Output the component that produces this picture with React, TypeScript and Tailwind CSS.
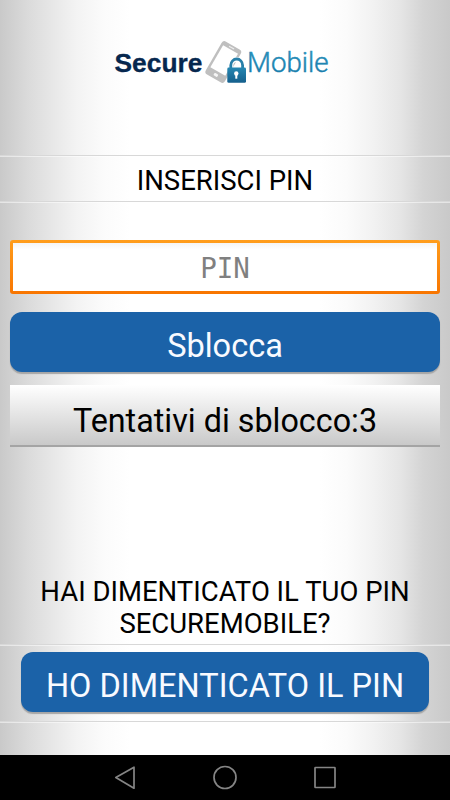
import React from 'react'

interface ActionButtonProps {
  children: React.ReactNode
}

function ActionButton({ children }: ActionButtonProps) {
  return (
    <button className="flex h-[60px] w-full items-center justify-center rounded-[12px] bg-[#1b62a8] pt-[8px] text-[32.5px] leading-none text-[#f8faff] shadow-[0_2px_1px_#a6a6a6]">
      {children}
    </button>
  )
}

// 1px grey line with a light one below it
function Divider() {
  return <div className="h-[2px] border-t border-[#d8d8d8] bg-white/50" />
}

function Logo() {
  return (
    <svg width="220" height="56" viewBox="110 36 220 56" fill="none">
      <defs>
        <linearGradient id="mobileText" x1="0" y1="0" x2="0" y2="1">
          <stop offset="0" stopColor="#2d94bd" />
          <stop offset="1" stopColor="#1478a8" />
        </linearGradient>
        <linearGradient id="lockBody" x1="0" y1="0" x2="0" y2="1">
          <stop offset="0" stopColor="#2587b2" />
          <stop offset="1" stopColor="#155f8c" />
        </linearGradient>
      </defs>
      <text x="114.5" y="72.3" textLength="88" lengthAdjust="spacingAndGlyphs" fontFamily="Liberation Sans, Arial, sans-serif" fontWeight="700" fontSize="26.5" fill="#06274e" stroke="#06274e" strokeWidth=".3">Secure</text>
      <g transform="translate(223.3 62) rotate(30)">
        <rect x="-11" y="-19" width="22" height="38" rx="3.2" fill="#bfbfbf" />
        <rect x="-8.6" y="-14.5" width="17.2" height="25.5" fill="#fff" />
        <rect x="-3" y="-17.2" width="6" height="1.2" rx=".6" fill="#eee" />
        <rect x="-2.2" y="13.5" width="4.4" height="2.8" rx="1" fill="#f5f5f5" />
      </g>
      <path d="M230.8 70V65.8a5.9 6.3 0 0 1 11.8 0V70" stroke="#fff" strokeWidth="5" />
      <path d="M230.8 70V65.3a5.9 6.3 0 0 1 11.8 0V70" stroke="#287fa9" strokeWidth="2.8" />
      <rect x="227.3" y="67.5" width="18.7" height="15.3" rx="1.4" fill="url(#lockBody)" />
      <circle cx="236.3" cy="73.5" r="2.2" fill="#fff" />
      <path d="M235.3 74h2v4.7h-2z" fill="#fff" />
      <text x="247" y="72.3" textLength="81.5" lengthAdjust="spacingAndGlyphs" fontFamily="Roboto, sans-serif" fontWeight="300" fontSize="28.5" fill="url(#mobileText)" stroke="url(#mobileText)" strokeWidth=".45">Mobile</text>
    </svg>
  )
}

function NavigationBar() {
  return (
    <nav className="flex h-[45px] items-center bg-black">
      <svg width="450" height="45" viewBox="0 0 450 45" fill="none" stroke="#858585" strokeWidth="1.7" strokeLinejoin="round">
        <path d="M115.8 22.4L134 12.2V33.2Z" />
        <circle cx="225" cy="22.5" r="11" />
        <rect x="315" y="12.5" width="20" height="20" rx=".5" />
      </svg>
    </nav>
  )
}

export default function App() {
  return (
    <div className="flex h-[800px] w-[450px] flex-col overflow-hidden font-[Roboto,sans-serif] text-black">
      <main className="flex h-[755px] flex-col bg-[linear-gradient(90deg,#c9c9c9_0%,#dadada_6%,#e8e8e8_12%,#f3f3f3_17%,#fbfbfb_23%,#fff_29%,#fff_71%,#fbfbfb_77%,#f2f2f2_83%,#e5e5e5_89%,#d4d4d4_94%,#c9c9c9_100%)]">
        <header className="flex h-[155px] justify-center pt-[36px]">
          <div className="mr-[10px]">
            <Logo />
          </div>
        </header>

        <Divider />
        <h1 className="flex h-[44px] items-center justify-center pt-[3px] text-[27.5px] leading-none">INSERISCI PIN</h1>
        <Divider />

        <section className="flex flex-col px-[10px] pt-[37px]">
          <div className="h-[54px] rounded-[3px] bg-[linear-gradient(#ff9d1c,#f87500)] p-[3px]">
            <input
              type="password"
              placeholder="PIN"
              className="block h-[48px] w-full bg-white bg-[linear-gradient(#f4f4f4,#fff_7px)] pt-[1px] text-center font-['DejaVu_Sans_Mono',monospace] text-[27.5px] outline-none placeholder:text-[#808080]"
            />
          </div>
          <div className="mt-[18px]">
            <ActionButton>Sblocca</ActionButton>
          </div>
          <div className="mt-[13px] flex h-[62px] items-center justify-center border-b-2 border-[#a4a4a4] bg-[linear-gradient(#fff,#c9c9c9)] pt-[13px] text-[32.3px] leading-none">
            Tentativi di sblocco:3
          </div>
        </section>

        <p className="mt-[129px] h-[68px] text-center text-[27.5px] leading-[32px]">
          HAI DIMENTICATO IL TUO PIN
          <br />
          SECUREMOBILE?
        </p>
        <Divider />
        <div className="h-[75px] px-[21px] pt-[6px]">
          <ActionButton>HO DIMENTICATO IL PIN</ActionButton>
        </div>
        <Divider />
      </main>
      <NavigationBar />
    </div>
  )
}
